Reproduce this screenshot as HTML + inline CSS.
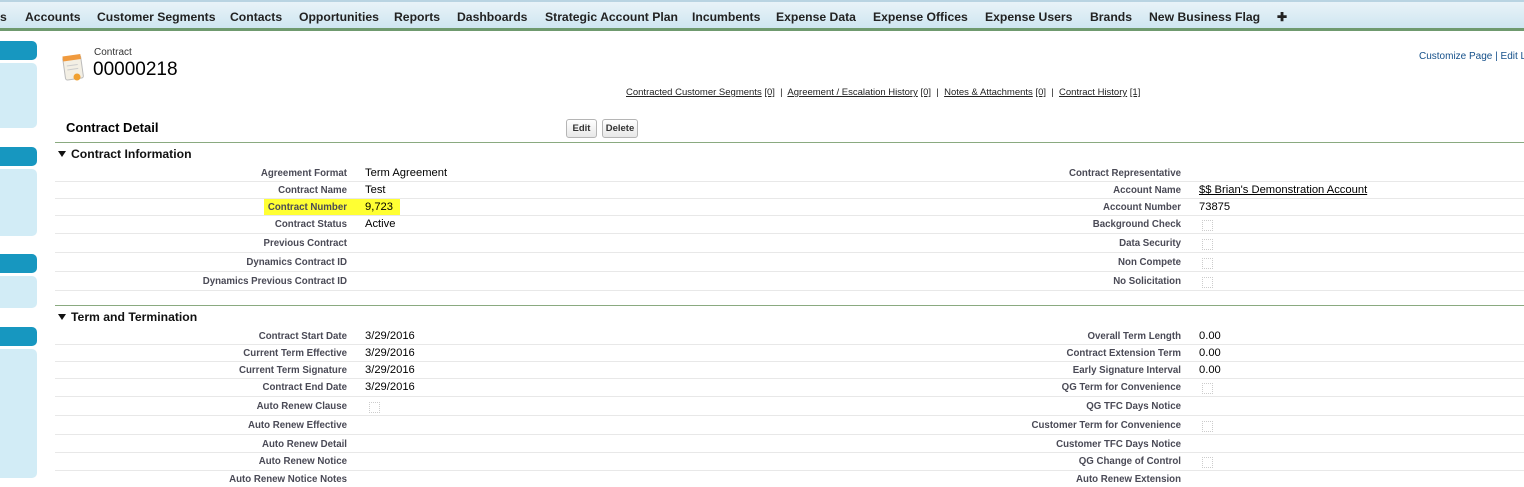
<!DOCTYPE html>
<html><head><style>
*{margin:0;padding:0;box-sizing:border-box}
body{width:1524px;height:478px;overflow:hidden;background:#fff;font-family:"Liberation Sans",Arial,sans-serif;position:relative}
.a{position:absolute;white-space:nowrap}
.nav{position:absolute;left:0;top:0;width:1524px;height:31px;background:linear-gradient(#e9f3f8,#cfe6f1);border-top:2px solid #b9d4e2;border-bottom:3px solid #6f9a6f}
.nav span{position:absolute;top:8px;font-size:12.2px;font-weight:bold;color:#222}
.sd{position:absolute;left:0;width:37px;background:#1797c0;border-radius:0 5px 5px 0}
.sl{position:absolute;left:0;width:37px;background:#d2ecf6;border-radius:0 5px 5px 0}
.l{position:absolute;font-size:9.7px;font-weight:bold;color:#4a4a56;text-align:right;line-height:14px;white-space:nowrap;margin-top:1px}
.v{position:absolute;font-size:11.2px;color:#000;line-height:14px;white-space:nowrap}
.sep{position:absolute;left:55px;width:1469px;height:1px;background:#e8e8e8}
.cb{position:absolute;width:11px;height:11px;border:1px dotted #ccc}
.btn{position:absolute;top:119px;height:19px;border:1px solid #b5b5b5;border-radius:3px;background:linear-gradient(#fff,#e8e8e8);font-size:9.5px;font-weight:bold;color:#333;text-align:center;line-height:17px}
.lk{text-decoration:underline}
.sec{position:absolute;left:71px;font-size:12.2px;font-weight:bold;color:#111}
.arr{position:absolute;left:58px;width:0;height:0;border-left:4px solid transparent;border-right:4px solid transparent;border-top:6px solid #111}
.gl{position:absolute;left:55px;width:1469px;height:1px;background:#8aaa80}
</style></head><body>
<div class="nav">
<span style="left:0">s</span><span style="left:25px">Accounts</span><span style="left:97px">Customer Segments</span><span style="left:230px">Contacts</span><span style="left:299px">Opportunities</span><span style="left:394px">Reports</span><span style="left:457px">Dashboards</span><span style="left:545px">Strategic Account Plan</span><span style="left:692px">Incumbents</span><span style="left:776px">Expense Data</span><span style="left:873px">Expense Offices</span><span style="left:985px">Expense Users</span><span style="left:1090px">Brands</span><span style="left:1149px">New Business Flag</span><span style="left:1277px">✚</span>
</div>
<div class="sd" style="top:41px;height:19px"></div><div class="sl" style="top:63px;height:65px"></div>
<div class="sd" style="top:147px;height:19px"></div><div class="sl" style="top:169px;height:67px"></div>
<div class="sd" style="top:254px;height:19px"></div><div class="sl" style="top:276px;height:32px"></div>
<div class="sd" style="top:327px;height:19px"></div><div class="sl" style="top:349px;height:129px"></div>

<svg class="a" style="left:62px;top:52px" width="24" height="30" viewBox="0 0 24 30"><g transform="rotate(-8 12 15)"><rect x="2" y="4" width="18" height="23" rx="2" fill="#f3efe4" stroke="#bbb"/><rect x="2" y="3" width="18" height="5" fill="#f09a3e"/><line x1="5" y1="13" x2="16" y2="13" stroke="#ccc"/><line x1="5" y1="17" x2="16" y2="17" stroke="#ccc"/></g><circle cx="15" cy="25" r="3.5" fill="#f0a030"/></svg>
<div class="a" style="left:94px;top:47px;font-size:10px;color:#333">Contract</div>
<div class="a" style="left:93px;top:59px;font-size:19px;color:#000">00000218</div>
<div class="a" style="left:1419px;top:51px;font-size:10px;color:#15508a">Customize Page | Edit L</div>
<div class="a" style="left:626px;top:87px;font-size:9.5px;color:#222"><span class="lk">Contracted Customer Segments</span> <span class="lk">[0]</span> &nbsp;|&nbsp; <span class="lk">Agreement / Escalation History</span> <span class="lk">[0]</span> &nbsp;|&nbsp; <span class="lk">Notes &amp; Attachments</span> <span class="lk">[0]</span> &nbsp;|&nbsp; <span class="lk">Contract History</span> <span class="lk">[1]</span></div>
<div class="a" style="left:66px;top:120px;font-size:13px;font-weight:bold;color:#000">Contract Detail</div>
<div class="btn" style="left:566px;width:31px">Edit</div><div class="btn" style="left:602px;width:36px">Delete</div>
<div class="gl" style="top:142px"></div>
<div class="arr" style="top:151px"></div><div class="sec" style="top:147px">Contract Information</div>

<div class="a" style="left:264px;top:198px;width:136px;height:18px;background:#ffff33"></div>

<div class="l" style="right:1177px;top:166px">Agreement Format</div><div class="v" style="left:365px;top:166px">Term Agreement</div>
<div class="l" style="right:1177px;top:183px">Contract Name</div><div class="v" style="left:365px;top:183px">Test</div>
<div class="l" style="right:1177px;top:200px">Contract Number</div><div class="v" style="left:365px;top:200px">9,723</div>
<div class="l" style="right:1177px;top:217px">Contract Status</div><div class="v" style="left:365px;top:217px">Active</div>
<div class="l" style="right:1177px;top:236px">Previous Contract</div>
<div class="l" style="right:1177px;top:255px">Dynamics Contract ID</div>
<div class="l" style="right:1177px;top:274px">Dynamics Previous Contract ID</div>

<div class="l" style="right:343px;top:166px">Contract Representative</div>
<div class="l" style="right:343px;top:183px">Account Name</div><div class="v" style="left:1199px;top:183px;text-decoration:underline">$$ Brian's Demonstration Account</div>
<div class="l" style="right:343px;top:200px">Account Number</div><div class="v" style="left:1199px;top:200px">73875</div>
<div class="l" style="right:343px;top:217px">Background Check</div><div class="cb" style="left:1202px;top:220px"></div>
<div class="l" style="right:343px;top:236px">Data Security</div><div class="cb" style="left:1202px;top:239px"></div>
<div class="l" style="right:343px;top:255px">Non Compete</div><div class="cb" style="left:1202px;top:258px"></div>
<div class="l" style="right:343px;top:274px">No Solicitation</div><div class="cb" style="left:1202px;top:277px"></div>

<div class="sep" style="top:181px"></div><div class="sep" style="top:198px"></div><div class="sep" style="top:215px"></div><div class="sep" style="top:233px"></div><div class="sep" style="top:252px"></div><div class="sep" style="top:271px"></div><div class="sep" style="top:290px"></div>

<div class="gl" style="top:305px"></div>
<div class="arr" style="top:314px"></div><div class="sec" style="top:310px">Term and Termination</div>

<div class="l" style="right:1177px;top:329px">Contract Start Date</div><div class="v" style="left:365px;top:329px">3/29/2016</div>
<div class="l" style="right:1177px;top:346px">Current Term Effective</div><div class="v" style="left:365px;top:346px">3/29/2016</div>
<div class="l" style="right:1177px;top:363px">Current Term Signature</div><div class="v" style="left:365px;top:363px">3/29/2016</div>
<div class="l" style="right:1177px;top:380px">Contract End Date</div><div class="v" style="left:365px;top:380px">3/29/2016</div>
<div class="l" style="right:1177px;top:399px">Auto Renew Clause</div><div class="cb" style="left:369px;top:402px"></div>
<div class="l" style="right:1177px;top:418px">Auto Renew Effective</div>
<div class="l" style="right:1177px;top:437px">Auto Renew Detail</div>
<div class="l" style="right:1177px;top:454px">Auto Renew Notice</div>
<div class="l" style="right:1177px;top:472px">Auto Renew Notice Notes</div>

<div class="l" style="right:343px;top:329px">Overall Term Length</div><div class="v" style="left:1199px;top:329px">0.00</div>
<div class="l" style="right:343px;top:346px">Contract Extension Term</div><div class="v" style="left:1199px;top:346px">0.00</div>
<div class="l" style="right:343px;top:363px">Early Signature Interval</div><div class="v" style="left:1199px;top:363px">0.00</div>
<div class="l" style="right:343px;top:380px">QG Term for Convenience</div><div class="cb" style="left:1202px;top:383px"></div>
<div class="l" style="right:343px;top:399px">QG TFC Days Notice</div>
<div class="l" style="right:343px;top:418px">Customer Term for Convenience</div><div class="cb" style="left:1202px;top:421px"></div>
<div class="l" style="right:343px;top:437px">Customer TFC Days Notice</div>
<div class="l" style="right:343px;top:454px">QG Change of Control</div><div class="cb" style="left:1202px;top:457px"></div>
<div class="l" style="right:343px;top:472px">Auto Renew Extension</div>

<div class="sep" style="top:344px"></div><div class="sep" style="top:361px"></div><div class="sep" style="top:378px"></div><div class="sep" style="top:396px"></div><div class="sep" style="top:415px"></div><div class="sep" style="top:434px"></div><div class="sep" style="top:452px"></div><div class="sep" style="top:470px"></div>
</body></html>
